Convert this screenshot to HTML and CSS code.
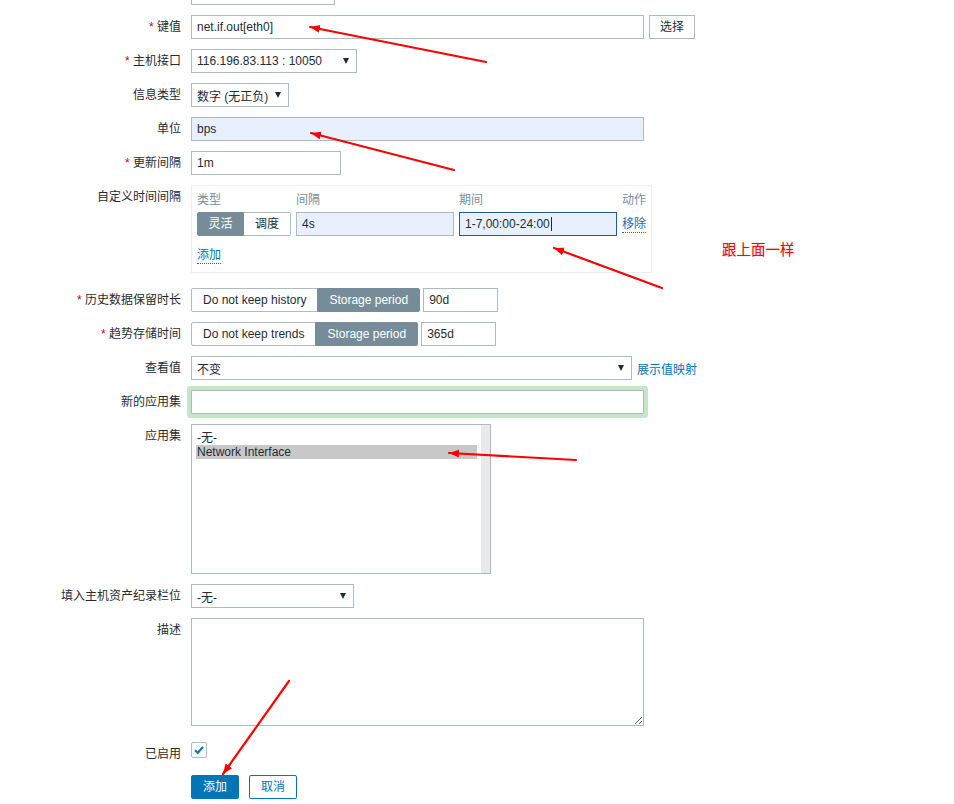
FILE: index.html
```html
<!DOCTYPE html>
<html lang="zh-CN">
<head>
<meta charset="utf-8">
<title>监控项</title>
<link rel="stylesheet" href="styles.css">
</head>
<body>
<ul class="form-list">
  <li class="row">
    <div class="label"></div>
    <div class="field"><div class="input w-name"></div></div>
  </li>
  <li class="row">
    <div class="label"><span class="req">*</span> 键值</div>
    <div class="field gap5">
      <div class="input w-std">net.if.out[eth0]</div>
      <button class="btn-grey" type="button">选择</button>
    </div>
  </li>
  <li class="row">
    <div class="label"><span class="req">*</span> 主机接口</div>
    <div class="field">
      <div class="select w-host"><span>116.196.83.113 : 10050</span><i class="caret-down"></i></div>
    </div>
  </li>
  <li class="row">
    <div class="label">信息类型</div>
    <div class="field">
      <div class="select w-type"><span>数字 (无正负)</span><i class="caret-down"></i></div>
    </div>
  </li>
  <li class="row">
    <div class="label">单位</div>
    <div class="field"><div class="input w-std autofill">bps</div></div>
  </li>
  <li class="row">
    <div class="label"><span class="req">*</span> 更新间隔</div>
    <div class="field"><div class="input w-small">1m</div></div>
  </li>
  <li class="row row-block">
    <div class="label">自定义时间间隔</div>
    <div class="intervals">
      <div class="intervals-grid">
        <div class="th">类型</div>
        <div class="th">间隔</div>
        <div class="th">期间</div>
        <div class="th">动作</div>

        <div class="segmented seg-small">
          <span class="seg active">灵活</span><span class="seg">调度</span>
        </div>
        <div class="input autofill">4s</div>
        <div class="input autofill focused">1-7,00:00-24:00<span class="text-caret"></span></div>
        <div class="action"><a class="link-dotted">移除</a></div>
      </div>
      <div class="intervals-footer"><a class="link-dotted">添加</a></div>
    </div>
  </li>
  <li class="row">
    <div class="label"><span class="req">*</span> 历史数据保留时长</div>
    <div class="field gap3">
      <div class="segmented">
        <span class="seg">Do not keep history</span><span class="seg active">Storage period</span>
      </div>
      <div class="input w-tiny">90d</div>
    </div>
  </li>
  <li class="row">
    <div class="label"><span class="req">*</span> 趋势存储时间</div>
    <div class="field gap3">
      <div class="segmented">
        <span class="seg">Do not keep trends</span><span class="seg active">Storage period</span>
      </div>
      <div class="input w-tiny">365d</div>
    </div>
  </li>
  <li class="row">
    <div class="label">查看值</div>
    <div class="field gap5">
      <div class="select w-view"><span>不变</span><i class="caret-down"></i></div>
      <a class="link">展示值映射</a>
    </div>
  </li>
  <li class="row">
    <div class="label">新的应用集</div>
    <div class="field"><div class="input w-std glow"></div></div>
  </li>
  <li class="row">
    <div class="label">应用集</div>
    <div class="listbox">
      <ul class="listbox-items">
        <li>-无-</li>
        <li class="selected">Network Interface</li>
      </ul>
      <div class="listbox-track"></div>
    </div>
  </li>
  <li class="row">
    <div class="label">填入主机资产纪录栏位</div>
    <div class="field">
      <div class="select w-inv"><span>-无-</span><i class="caret-down"></i></div>
    </div>
  </li>
  <li class="row">
    <div class="label">描述</div>
    <textarea class="textarea w-std"></textarea>
  </li>
  <li class="row row-check">
    <div class="label">已启用</div>
    <div class="field">
      <span class="checkbox">
        <svg width="14" height="14" viewBox="0 0 14 14"><path d="M3 7.2 L5.8 9.8 L11 4" fill="none" stroke="#0275b8" stroke-width="2.2"/></svg>
      </span>
    </div>
  </li>
  <li class="row row-buttons">
    <div class="label"></div>
    <div class="field gap10">
      <button class="btn" type="button">添加</button>
      <button class="btn btn-outline" type="button">取消</button>
    </div>
  </li>
</ul>

<svg class="annotations" width="954" height="804" viewBox="0 0 954 804">
  <defs>
    <marker id="head" markerUnits="userSpaceOnUse" markerWidth="12" markerHeight="9" refX="10" refY="4" orient="auto">
      <path d="M0,0 L10,4 L0,8 z" fill="#ff0000"/>
    </marker>
  </defs>
  <g stroke="#ff0000" stroke-width="2.2" stroke-linecap="round" fill="none" marker-end="url(#head)">
    <line x1="486" y1="62" x2="310" y2="27"/>
    <line x1="454" y1="170" x2="311" y2="133"/>
    <line x1="662" y1="288" x2="554" y2="248"/>
    <line x1="576" y1="460" x2="449" y2="453"/>
    <line x1="289" y1="681" x2="223" y2="774"/>
  </g>
</svg>
<div class="note">跟上面一样</div>
</body>
</html>
```

FILE: styles.css
```css
* { box-sizing: border-box; }

html, body {
  margin: 0;
  padding: 0;
  background: #fff;
}

body {
  position: relative;
  width: 954px;
  height: 804px;
  overflow: hidden;
  font-family: "Liberation Sans", Arial, "Noto Sans CJK SC", sans-serif;
  font-size: 12px;
  color: #1f2c33;
}

/* form rows: label column + control column */
.form-list {
  list-style: none;
  margin: -24px 0 0;
  padding: 0;
}

.row {
  display: grid;
  grid-template-columns: 181px auto;
  column-gap: 10px;
  align-items: start;
  padding: 5px 0;
}

.row-block { padding-bottom: 10px; }
.row-check { padding-top: 11px; }
.row-buttons { padding-top: 4px; }

.label {
  text-align: right;
  line-height: 24px;
  min-height: 24px;
  white-space: nowrap;
}

.req { color: #d40000; }

.field {
  display: flex;
  align-items: center;
}
.gap3 { gap: 3px; }
.gap5 { gap: 5px; }
.gap10 { gap: 10px; }

/* text fields */
.input {
  height: 24px;
  border: 1px solid #acbbc2;
  background: #fff;
  padding: 0 5px;
  line-height: 22px;
  white-space: nowrap;
  overflow: hidden;
}
.autofill { background: #e8f0fe; }
.focused { border-color: #1f5f91; }
.glow { box-shadow: 0 0 0 4px #c6e4c8; border-radius: 1px; }

.text-caret {
  display: inline-block;
  width: 1px;
  height: 14px;
  margin-left: 1px;
  vertical-align: -3px;
  background: #1f2c33;
}

.w-name { width: 144px; }
.w-std { width: 453px; }
.w-small { width: 150px; }
.w-tiny { width: 75px; }
.w-host { width: 166px; }
.w-type { width: 98px; }
.w-view { width: 441px; }
.w-inv { width: 163px; }

/* drop-downs */
.select {
  display: flex;
  align-items: center;
  justify-content: space-between;
  height: 24px;
  border: 1px solid #acbbc2;
  background: #fff;
  padding: 0 7px 0 5px;
  white-space: nowrap;
}
.caret-down {
  width: 0;
  height: 0;
  border-left: 3px solid transparent;
  border-right: 3px solid transparent;
  border-top: 6px solid #1f2c33;
}

.btn-grey {
  height: 24px;
  padding: 0 10px;
  border: 1px solid #acbbc2;
  background: #fff;
  color: #1f2c33;
  font: inherit;
  line-height: 22px;
}

/* segmented radio buttons */
.segmented {
  display: flex;
}
.seg {
  height: 24px;
  padding: 0 11px;
  border: 1px solid #acbbc2;
  background: #fff;
  line-height: 22px;
  white-space: nowrap;
}
.seg + .seg { margin-left: -1px; }
.seg:first-child { border-radius: 2px 0 0 2px; }
.seg:last-child { border-radius: 0 2px 2px 0; }
.seg.active {
  background: #768d99;
  border-color: #768d99;
  color: #fff;
}

/* custom intervals table */
.intervals {
  width: 461px;
  border: 1px solid #ebeef0;
  padding: 5px;
}
.intervals-grid {
  display: grid;
  grid-template-columns: 94px 158px 158px 24px;
  column-gap: 5px;
  row-gap: 3px;
}
.th {
  line-height: 18px;
  color: #768d99;
  white-space: nowrap;
}
.seg-small .seg { width: 47px; padding: 0; text-align: center; }
.seg-small .seg + .seg { margin-left: 0; border-left: none; }
.action {
  display: flex;
  align-items: center;
  height: 24px;
}
.intervals-footer {
  margin-top: 7px;
  height: 24px;
  display: flex;
  align-items: center;
}

.link-dotted {
  color: #0275b8;
  line-height: 16px;
  border-bottom: 1px dotted #0275b8;
  white-space: nowrap;
}
.link {
  color: #0275b8;
  white-space: nowrap;
}

/* multi-select list */
.listbox {
  display: flex;
  width: 300px;
  height: 150px;
  border: 1px solid #acbbc2;
  background: #fff;
}
.listbox-items {
  flex: 1;
  list-style: none;
  margin: 0;
  padding: 6px 4px 0;
}
.listbox-items li {
  line-height: 14px;
  padding-left: 1px;
  white-space: nowrap;
}
.listbox-items .selected { background: #c8c8c8; }
.listbox-track {
  width: 9px;
  background: #e9e9e9;
}

.textarea {
  display: block;
  height: 108px;
  margin: 0;
  border: 1px solid #acbbc2;
  padding: 4px 5px;
  font: inherit;
  color: inherit;
  resize: both;
}

.checkbox {
  display: inline-flex;
  align-items: center;
  justify-content: center;
  width: 16px;
  height: 16px;
  border: 1px solid #acbbc2;
  border-radius: 2px;
  background: #fff;
}

.btn {
  height: 24px;
  padding: 0 11px;
  border: 1px solid #0275b8;
  border-radius: 2px;
  background: #0275b8;
  color: #fff;
  font: inherit;
  line-height: 22px;
}
.btn-outline {
  background: #fff;
  color: #0275b8;
}

/* red review marks drawn over the form */
.annotations {
  position: absolute;
  left: 0;
  top: 0;
  pointer-events: none;
}
.note {
  position: absolute;
  left: 722px;
  top: 241px;
  font-size: 14.5px;
  line-height: 18px;
  color: #ff0000;
  text-shadow: 0 0 2px #c8c8c8, 0 0 1px #fff;
  white-space: nowrap;
}
```
